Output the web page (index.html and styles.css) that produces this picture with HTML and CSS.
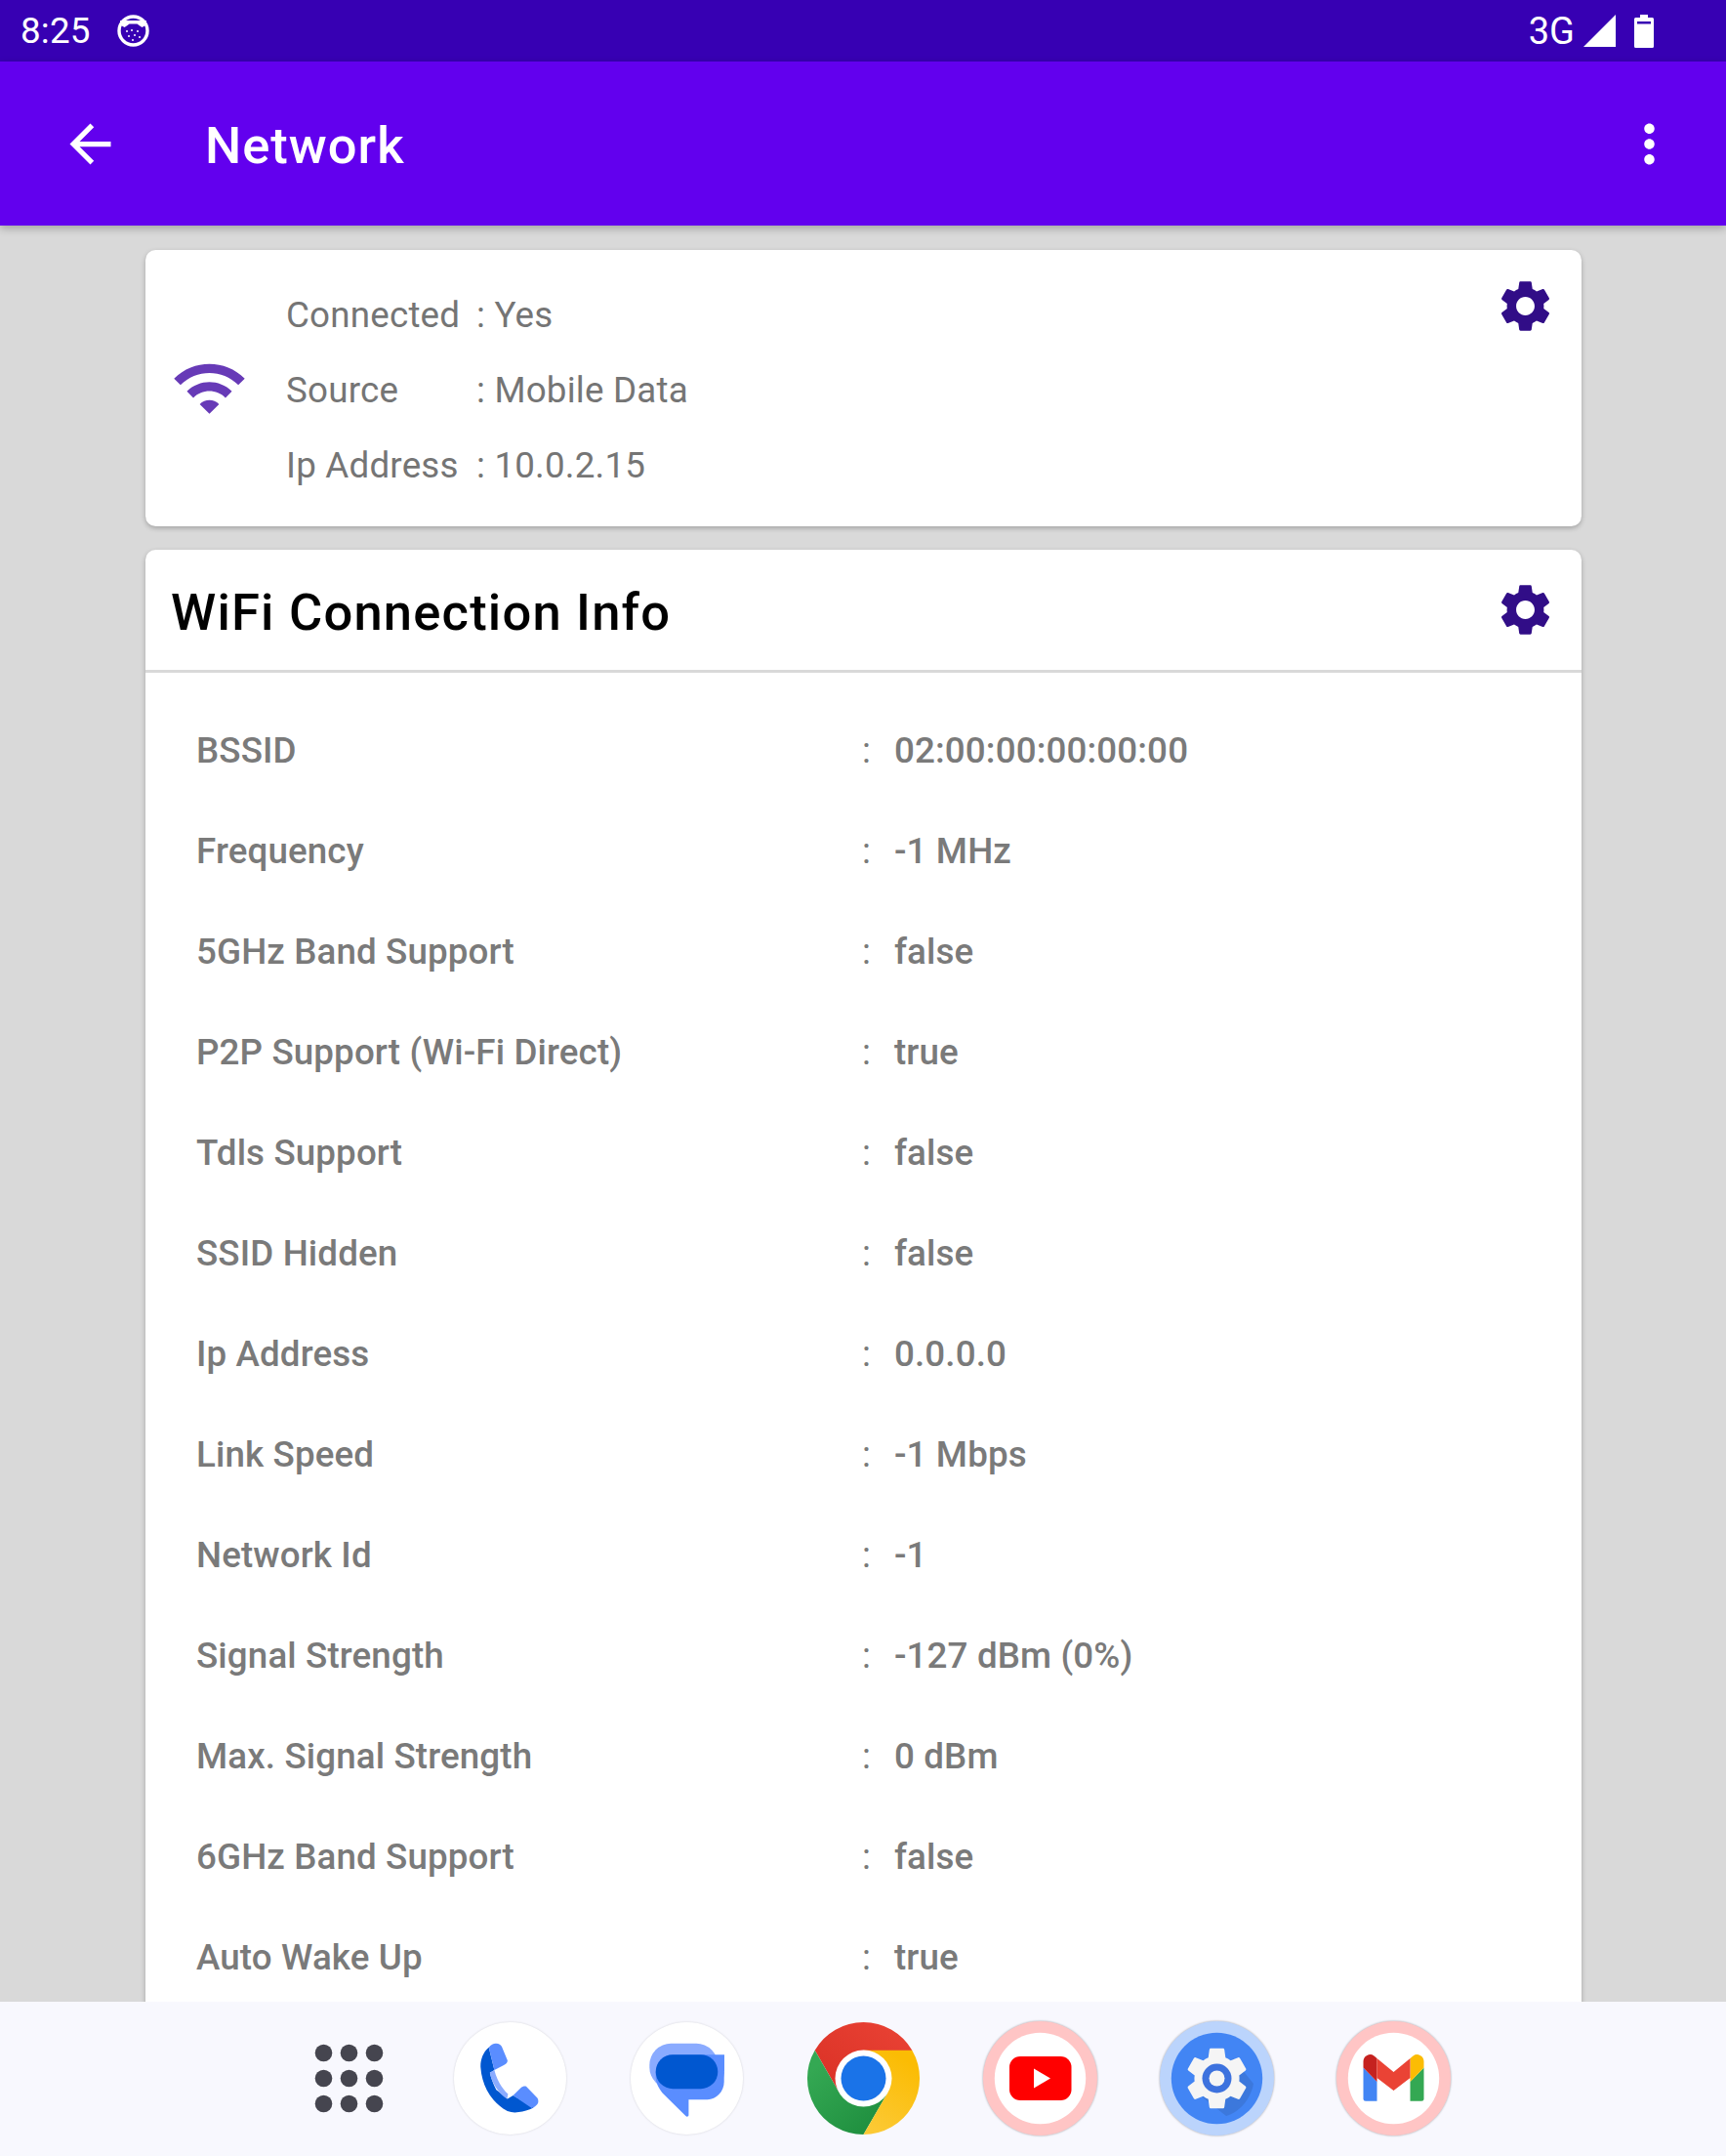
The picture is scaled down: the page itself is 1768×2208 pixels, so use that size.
FILE: index.html

```html
<!DOCTYPE html>
<html lang="en">
<head>
  <meta charset="UTF-8" />
  <meta name="viewport" content="width=device-width, initial-scale=1.0" />
  <title>Network</title>
  <link rel="stylesheet" href="styles.css">
</head>
<body>
  <svg class="defs" aria-hidden="true">
    <defs>
      <path id="gear" d="M19.14 12.94c.04-.3.06-.61.06-.94 0-.32-.02-.64-.07-.94l2.03-1.58c.18-.14.23-.41.12-.61l-1.92-3.32c-.12-.22-.37-.29-.59-.22l-2.39.96c-.5-.38-1.03-.7-1.62-.94l-.36-2.54c-.04-.24-.24-.41-.48-.41h-3.84c-.24 0-.43.17-.47.41l-.36 2.54c-.59.24-1.13.57-1.62.94l-2.39-.96c-.22-.08-.47 0-.59.22L2.74 8.87c-.12.21-.08.47.12.61l2.03 1.58c-.05.3-.09.63-.09.94s.02.64.07.94l-2.03 1.58c-.18.14-.23.41-.12.61l1.92 3.32c.12.22.37.29.59.22l2.39-.96c.5.38 1.03.7 1.62.94l.36 2.54c.05.24.24.41.48.41h3.84c.24 0 .44-.17.47-.41l.36-2.54c.59-.24 1.13-.56 1.62-.94l2.39.96c.22.08.47 0 .59-.22l1.92-3.32c.12-.22.07-.47-.12-.61l-2.01-1.58zM12 15.6c-1.98 0-3.6-1.62-3.6-3.6s1.62-3.6 3.6-3.6 3.6 1.62 3.6 3.6-1.62 3.6-3.6 3.6z"/>
    </defs>
  </svg>

  <div class="status-bar">
    <span class="time">8:25</span>
    <svg class="notif-icon" viewBox="0 0 33 33">
      <circle cx="16.500" cy="16.500" r="14.500" fill="#3700b3" stroke="#fff" stroke-width="3.400"/>
      <path d="M3 6h27l-1 5-3.500 2-3-2-2-1.500h-8l-2 1.500-3 2L4 11z" fill="#fff"/>
      <g fill="#fff" opacity="0.75">
        <rect x="9" y="16" width="2" height="2"/><rect x="14" y="15" width="2" height="2"/>
        <rect x="20" y="16" width="2" height="2"/><rect x="11" y="21" width="2" height="2"/>
        <rect x="17" y="20" width="2" height="2"/><rect x="22" y="22" width="2" height="2"/>
        <rect x="15" y="25" width="2" height="2"/>
      </g>
    </svg>
    <span class="spacer"></span>
    <span class="net-type">3G</span>
    <svg class="signal-icon" viewBox="0 0 33 33"><path d="M33 0v33H0z" fill="#fff"/></svg>
    <svg class="battery-icon" viewBox="0 0 20 34">
      <path d="M6 0h8v3h4.500A1.500 1.500 0 0 1 20 4.500V32.500A1.500 1.500 0 0 1 18.500 34H1.500A1.500 1.500 0 0 1 0 32.500V4.500A1.500 1.500 0 0 1 1.500 3H6z" fill="#fff"/>
      <rect x="3" y="7" width="14" height="2.500" fill="#3700b3"/>
    </svg>
  </div>

  <header class="app-bar">
    <svg class="bar-icon" viewBox="0 0 24 24"><path d="M20 11H7.830l5.590-5.590L12 4l-8 8 8 8 1.410-1.410L7.830 13H20v-2z" fill="#fff"/></svg>
    <h1 class="bar-title">Network</h1>
    <svg class="bar-icon" viewBox="0 0 24 24"><path d="M12 8c1.100 0 2-.9 2-2s-.9-2-2-2-2 .9-2 2 .9 2 2 2zm0 2c-1.100 0-2 .9-2 2s.9 2 2 2 2-.9 2-2-.9-2-2-2zm0 6c-1.100 0-2 .9-2 2s.9 2 2 2 2-.9 2-2-.9-2-2-2z" fill="#fff"/></svg>
  </header>

  <main class="content">
    <section class="card summary">
      <svg class="wifi-icon" viewBox="0 0 24 24"><path d="M1 9l2 2c4.970-4.970 13.030-4.970 18 0l2-2C16.930 2.930 7.080 2.930 1 9zm8 8l3 3 3-3c-1.650-1.660-4.340-1.660-6 0zm-4-4l2 2c2.760-2.760 7.240-2.760 10 0l2-2C15.140 9.140 8.870 9.140 5 13z" fill="#673ab7"/></svg>
      <div class="summary-info">
        <span>Connected</span><span>: Yes</span>
        <span>Source</span><span>: Mobile Data</span>
        <span>Ip Address</span><span>: 10.0.2.15</span>
      </div>
      <svg class="gear-icon" viewBox="0 0 24 24"><use href="#gear"/></svg>
    </section>

    <section class="card info">
      <div class="info-head">
        <h2 class="info-title">WiFi Connection Info</h2>
        <svg class="gear-icon" viewBox="0 0 24 24"><use href="#gear"/></svg>
      </div>
      <div class="info-list">
        <div class="row"><span>BSSID</span><span class="colon">:</span><span>02:00:00:00:00:00</span></div>
        <div class="row"><span>Frequency</span><span class="colon">:</span><span>-1 MHz</span></div>
        <div class="row"><span>5GHz Band Support</span><span class="colon">:</span><span>false</span></div>
        <div class="row"><span>P2P Support (Wi-Fi Direct)</span><span class="colon">:</span><span>true</span></div>
        <div class="row"><span>Tdls Support</span><span class="colon">:</span><span>false</span></div>
        <div class="row"><span>SSID Hidden</span><span class="colon">:</span><span>false</span></div>
        <div class="row"><span>Ip Address</span><span class="colon">:</span><span>0.0.0.0</span></div>
        <div class="row"><span>Link Speed</span><span class="colon">:</span><span>-1 Mbps</span></div>
        <div class="row"><span>Network Id</span><span class="colon">:</span><span>-1</span></div>
        <div class="row"><span>Signal Strength</span><span class="colon">:</span><span>-127 dBm (0%)</span></div>
        <div class="row"><span>Max. Signal Strength</span><span class="colon">:</span><span>0 dBm</span></div>
        <div class="row"><span>6GHz Band Support</span><span class="colon">:</span><span>false</span></div>
        <div class="row"><span>Auto Wake Up</span><span class="colon">:</span><span>true</span></div>
      </div>
    </section>
  </main>

  <footer class="dock">
    <svg class="dock-apps" viewBox="0 0 85 117">
      <g fill="#45454f">
        <circle cx="16.500" cy="32.500" r="8.800"/><circle cx="42.500" cy="32.500" r="8.800"/><circle cx="68.500" cy="32.500" r="8.800"/>
        <circle cx="16.500" cy="58.500" r="8.800"/><circle cx="42.500" cy="58.500" r="8.800"/><circle cx="68.500" cy="58.500" r="8.800"/>
        <circle cx="16.500" cy="84.500" r="8.800"/><circle cx="42.500" cy="84.500" r="8.800"/><circle cx="68.500" cy="84.500" r="8.800"/>
      </g>
    </svg>

    <!-- phone -->
    <svg class="dock-icon soft" viewBox="0 0 117 117">
      <circle cx="58.500" cy="58.500" r="57.500" fill="#fff"/>
      <g transform="translate(1 1)">
        <path d="M35.700 25.800C29.500 31 27 39 27.300 46c.6 9 3 16.500 6.400 23.500 5 9.500 12.500 17 21.100 21.500 4 1.500 8 1.800 11.500 1 5-.5 10-2 15.300-4.500L60.600 75l-5.800 3.500C50 75 46.500 71 43.300 69.200 40 63 38 57 36.800 51.800L41.400 49z" fill="#0057d0"/>
        <path d="M36.800 51.800l4.600-2.800c2.500 10 7.500 18.500 14 24.500l-1 5c-9-6-15.500-16-17.600-26.700z" fill="#8aabff"/>
        <path d="M35.700 25.800C38 23 41 21.500 43.300 21.800c2.800.2 4.700 1.500 5.700 3.200l5.800 14c.3 2-1 4-3.800 5l-9.600 5z" fill="#5a8dff"/>
        <path d="M60.600 75l7.600-7.500c2-1.800 4.300-2.300 5.800-1.700l11.400 11.700c1.500 2.500 1.200 5 0 6.500-1.500 2-3.500 3.300-5.700 4z" fill="#5a8dff"/>
      </g>
    </svg>

    <!-- messages -->
    <svg class="dock-icon soft" viewBox="0 0 117 117">
      <circle cx="58.500" cy="58.500" r="57.500" fill="#fff"/>
      <rect x="20.300" y="22.800" width="70" height="46.400" rx="22" fill="#8aabff"/>
      <path d="M26.700 52h70v10c0 10-8 18.200-17 18.200H60.400v16c0 1.500-2 2-3 .8L33.600 73.500c-4-5-6.900-11-6.900-16z" fill="#5a8dff"/>
      <path d="M44 34.200h53V50c0 0 0 12-6.700 19.200H44c-10 0-17.300-8-17.300-17.500S34 34.200 44 34.200z" fill="#5a8dff"/>
      <rect x="26.700" y="34.200" width="63.600" height="35" rx="17.500" fill="#0057d0"/>
    </svg>

    <!-- chrome -->
    <svg class="dock-icon" viewBox="0 0 117 117">
      <defs>
        <linearGradient id="chromeRed" x1="0" y1="1" x2="1" y2="0"><stop offset="0" stop-color="#d93025"/><stop offset="1" stop-color="#ea4335"/></linearGradient>
        <linearGradient id="chromeGreen" x1="0.800" y1="1" x2="0.100" y2="0.200"><stop offset="0" stop-color="#1e8e3e"/><stop offset="1" stop-color="#34a853"/></linearGradient>
        <linearGradient id="chromeYellow" x1="0.300" y1="1" x2="0.700" y2="0.100"><stop offset="0" stop-color="#fcc934"/><stop offset="1" stop-color="#fbbc04"/></linearGradient>
      </defs>
      <path d="M108.300 29.700A57.500 57.500 0 0 0 8.700 29.700L33.600 73 58.500 58.500z" fill="url(#chromeRed)"/>
      <path d="M8.700 29.700L33.600 73H83.400L58.500 116A57.500 57.500 0 0 1 8.700 29.700z" fill="url(#chromeGreen)"/>
      <path d="M108.300 29.700H58.500L83.400 73 58.500 116A57.500 57.500 0 0 0 108.300 29.700z" fill="url(#chromeYellow)"/>
      <circle cx="58.500" cy="58.500" r="29" fill="#fff"/>
      <circle cx="58.500" cy="58.500" r="23" fill="#1a73e8"/>
    </svg>

    <!-- youtube -->
    <svg class="dock-icon ringed" viewBox="0 0 117 117">
      <circle cx="58.500" cy="58.500" r="58.500" fill="#ffc5c5"/>
      <circle cx="58.500" cy="58.500" r="46.700" fill="#fff"/>
      <rect x="27" y="36" width="63.500" height="45" rx="11" fill="#f00"/>
      <path d="M52 48.500l17 10-17 10z" fill="#fff"/>
    </svg>

    <!-- settings -->
    <svg class="dock-icon ringed" viewBox="0 0 117 117">
      <circle cx="58.500" cy="58.500" r="58.500" fill="#bbd4fc"/>
      <circle cx="58.500" cy="58.500" r="46.700" fill="#4285f4"/>
      <path d="M75 38l21 26c-3 16-14 29-28 33L44 78z" fill="#3c78dc"/>
      <use href="#gear" transform="translate(20.100 20.100) scale(3.200)" fill="#f5f5f5"/>
      <circle cx="58.500" cy="58.500" r="15" fill="#3d72de"/>
      <circle cx="58.500" cy="58.500" r="8" fill="#f5f5f5"/>
    </svg>

    <!-- gmail -->
    <svg class="dock-icon ringed" viewBox="0 0 117 117">
      <circle cx="58.500" cy="58.500" r="58.500" fill="#ffc5c5"/>
      <circle cx="58.500" cy="58.500" r="46.700" fill="#fff"/>
      <path d="M27.500 47.500L41.500 62V81.800H30a2.500 2.500 0 0 1-2.500-2.500z" fill="#4285f4"/>
      <path d="M89.500 47.500L75.500 62V81.800H87a2.500 2.500 0 0 0 2.500-2.500z" fill="#34a853"/>
      <path d="M27.500 47.500V41a7 7 0 0 1 11-5.600l3 2.500V62z" fill="#c5221f"/>
      <path d="M89.500 47.500V41a7 7 0 0 0-11-5.600l-3 2.500V62z" fill="#fbbc04"/>
      <path d="M41.500 38L58.500 52 75.500 38V58L58.500 71 41.500 58z" fill="#ea4335"/>
    </svg>
  </footer>
</body>
</html>
```

FILE: styles.css

```css
* {
  box-sizing: border-box;
}
html, body {
  height: 100%;
}
body {
  display: flex;
  flex-direction: column;
  height: 2208px;
  margin: 0;
  overflow: hidden;
  background-color: #d9d9d9;
  font-family: Roboto, "Liberation Sans", sans-serif;
}
.defs {
  display: none;
}
.status-bar {
  display: flex;
  align-items: center;
  flex: none;
  height: 63px;
  padding-left: 21px;
  padding-right: 74px;
  background: #3700b3;
  color: #fff;
  font-size: 36.750px;
}
.time {
  letter-spacing: 0.2px;
}
.notif-icon {
  width: 33px;
  height: 33px;
  margin-left: 27px;
}
.spacer {
  flex: 1;
}
.net-type {
  margin-right: 9px;
  font-size: 38px;
}
.signal-icon {
  width: 33px;
  height: 33px;
  margin-right: 19px;
}
.battery-icon {
  width: 20px;
  height: 34px;
}
.app-bar {
  position: relative;
  z-index: 1;
  display: flex;
  align-items: center;
  flex: none;
  height: 168px;
  padding: 0 47.500px 0 61px;
  background: #6200ee;
  box-shadow: 0 3px 8px rgba(0, 0, 0, 0.25);
  color: #fff;
}
.bar-icon {
  flex: none;
  width: 63px;
  height: 63px;
}
.bar-title {
  flex: 1;
  margin: 3px 0 0 86px;
  font-size: 52.500px;
  font-weight: 500;
  letter-spacing: 1px;
}
.content {
  flex: 1;
  min-height: 0;
  overflow: hidden;
  padding: 25px 148px 0 149px;
}
.card {
  background: #fff;
  border-radius: 10.500px;
  box-shadow: 0 2px 5px rgba(0, 0, 0, 0.25);
}
.summary {
  display: flex;
  align-items: center;
  height: 283px;
  margin-bottom: 24px;
  padding-left: 26px;
  padding-right: 26.500px;
}
.wifi-icon {
  flex: none;
  width: 79px;
  height: 79px;
}
.summary-info {
  display: grid;
  flex: 1;
  grid-template-columns: 195px 1fr;
  grid-auto-rows: 77px;
  align-items: center;
  margin-top: 4px;
  margin-left: 39px;
  color: #757575;
  font-size: 36.750px;
  letter-spacing: 0.2px;
}
.summary .gear-icon {
  align-self: flex-start;
  margin-top: 25.500px;
}
.gear-icon {
  flex: none;
  width: 63px;
  height: 63px;
  fill: #310d87;
}
.info {
  padding-bottom: 200px;
}
.info-head {
  display: flex;
  align-items: center;
  justify-content: space-between;
  height: 126px;
  padding-left: 26px;
  padding-right: 26.500px;
  border-bottom: 3px solid #d9d9d9;
}
.info-title {
  margin: 4px 0 0;
  color: #000;
  font-size: 52.500px;
  font-weight: 500;
  letter-spacing: 1.2px;
}
.info-list {
  padding: 28px 0 0 52px;
}
.row {
  display: grid;
  grid-template-columns: 682px 33px 1fr;
  align-items: center;
  height: 103px;
  color: #7a7a7a;
  font-size: 36.750px;
  font-weight: 500;
  letter-spacing: 0.12px;
}
.colon {
  font-weight: 400;
}
.dock {
  position: relative;
  z-index: 1;
  display: flex;
  align-items: center;
  flex: none;
  gap: 64px;
  height: 158px;
  padding-left: 314.500px;
  padding-bottom: 2px;
  background: #f8f8fe;
}
.dock-apps {
  flex: none;
  width: 85px;
  height: 117px;
}
.dock-icon {
  flex: none;
  width: 117px;
  height: 117px;
}
.soft {
  filter: drop-shadow(0 0 1px rgba(0, 0, 0, 0.15));
}
.ringed {
  filter: drop-shadow(0 0 1px rgba(0, 0, 0, 0.35));
}
```
